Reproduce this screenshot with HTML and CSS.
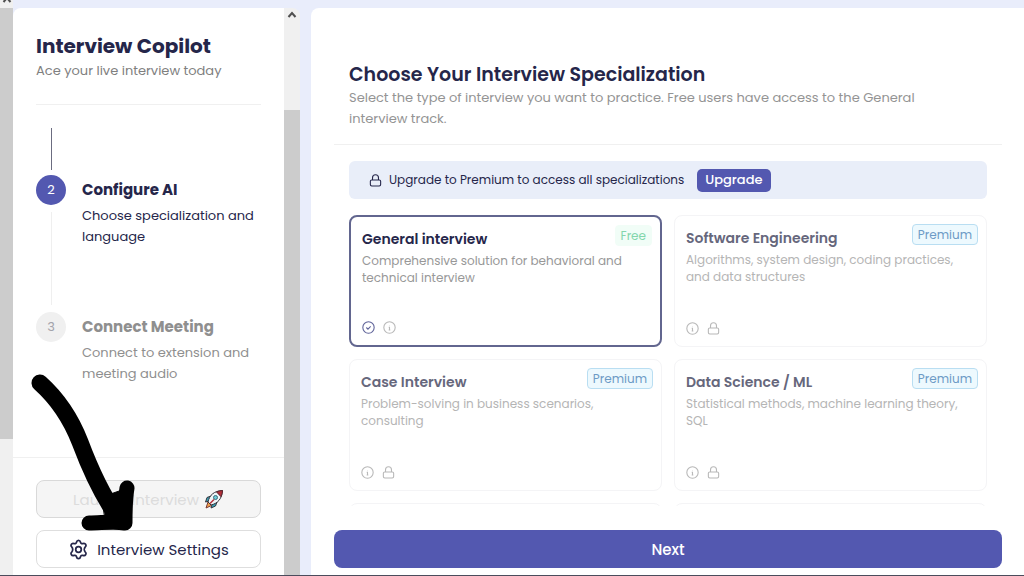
FILE: index.html
```html
<!DOCTYPE html>
<html lang="en">

<head>
  <meta charset="UTF-8">
  <title>Interview Copilot</title>
  <link rel="stylesheet" href="styles.css">
</head>

<body>
  <svg class="sprite" aria-hidden="true">
    <symbol id="lock" viewBox="0 0 24 24">
      <rect x="2.5" y="11" width="19" height="11" rx="2.5" />
      <path d="M6.5 11V7a5.500 5.500 0 0 1 11 0v4" />
    </symbol>
    <symbol id="info" viewBox="0 0 24 24">
      <circle cx="12" cy="12" r="10.500" />
      <path d="M10.500 11.500H12V16.500M10.500 16.500h3M12 7.500v.5" />
    </symbol>
    <symbol id="check" viewBox="0 0 24 24">
      <circle cx="12" cy="12" r="10.500" />
      <path d="M8 12l3 3 5-5" />
    </symbol>
    <symbol id="chevron" viewBox="0 0 10 10">
      <path d="M1.500 7L5 3l3.500 4" />
    </symbol>
  </svg>

  <div class="app">
    <div class="scrollbar scrollbar-page">
      <div class="scroll-cap"><svg class="chevron"><use href="#chevron" /></svg></div>
      <div class="scroll-thumb"></div>
    </div>

    <aside class="sidebar">
      <div class="sidebar-body">
        <header class="sidebar-header">
          <h1>Interview Copilot</h1>
          <p>Ace your live interview today</p>
        </header>

        <ol class="steps">
          <li class="step step-done">
            <div class="step-rail"><span class="step-line"></span></div>
          </li>
          <li class="step step-active">
            <div class="step-rail">
              <span class="step-number">2</span>
              <span class="step-line"></span>
            </div>
            <div class="step-text">
              <h2>Configure AI</h2>
              <p>Choose specialization and language</p>
            </div>
          </li>
          <li class="step">
            <div class="step-rail">
              <span class="step-number">3</span>
            </div>
            <div class="step-text">
              <h2>Connect Meeting</h2>
              <p>Connect to extension and meeting audio</p>
            </div>
          </li>
        </ol>

        <div class="sidebar-footer">
          <button class="btn btn-launch" disabled>
            Launch Interview
            <svg class="rocket" viewBox="0 0 20 20">
              <path d="M7 7L3 8.500 1.500 13l4-1zM13 13l-1.500 4L7 19l1-4z" fill="#39a0b5" stroke="#34343c" />
              <path d="M4 13l3.500 3.500L2 19z" fill="#f0a04b" stroke="#7b3b35" />
              <path d="M4 13C5.500 6 10 2 18.500 1.500 18 10 13.500 14.500 7 16z" fill="#eef5f8" stroke="#34343c" />
              <path d="M12.500 2.900C14.500 2 16.500 1.600 18.500 1.500 18.400 3.800 17.900 5.800 17 7.700z" fill="#b52e38" stroke="#5c242e" />
              <circle cx="11.500" cy="8.500" r="2" fill="#6fcbd8" stroke="#3a6e7c" />
              <path d="M6 14.500l4-4" stroke="#b52e38" stroke-width="1.500" />
            </svg>
          </button>
          <button class="btn btn-settings">
            <svg class="gear" viewBox="0 0 24 24">
              <path d="M12 1.500c1.500 0 2 .8 2.300 2.200.3 1.300 1.400 1.900 2.700 1.500 1.500-.5 2.500-.3 3.300 1 .8 1.400.4 2.200-.7 3.200-1.300 1.300-1.300 3.900 0 5.200 1.100 1 1.500 1.800.7 3.200-.8 1.300-1.800 1.500-3.300 1-1.300-.4-2.400.2-2.700 1.500-.3 1.400-.8 2.200-2.300 2.200s-2-.8-2.300-2.200c-.3-1.300-1.400-1.900-2.700-1.500-1.500.5-2.500.3-3.300-1-.8-1.400-.4-2.200.7-3.200 1.300-1.300 1.300-3.900 0-5.200-1.100-1-1.500-1.800-.7-3.200.8-1.300 1.800-1.500 3.300-1 1.300.4 2.400-.2 2.700-1.500.3-1.400.8-2.200 2.300-2.200z" />
              <circle cx="12" cy="12" r="3.200" />
            </svg>
            Interview Settings
          </button>
        </div>
      </div>

      <div class="scrollbar scrollbar-side">
        <div class="scroll-cap"><svg class="chevron"><use href="#chevron" /></svg></div>
        <div class="scroll-thumb"></div>
      </div>
    </aside>

    <main class="panel">
      <header class="panel-header">
        <h2>Choose Your Interview Specialization</h2>
        <p>Select the type of interview you want to practice. Free users have access to the General interview track.</p>
      </header>

      <div class="panel-scroll">
        <div class="banner">
          <svg class="icon"><use href="#lock" /></svg>
          <span>Upgrade to Premium to access all specializations</span>
          <button class="btn-upgrade">Upgrade</button>
        </div>

        <div class="cards">
          <button class="card card-selected">
            <span class="badge badge-free">Free</span>
            <span class="card-title">General interview</span>
            <span class="card-text">Comprehensive solution for behavioral and technical interview</span>
            <span class="card-icons">
              <svg class="icon icon-check"><use href="#check" /></svg>
              <svg class="icon"><use href="#info" /></svg>
            </span>
          </button>
          <button class="card">
            <span class="badge">Premium</span>
            <span class="card-title">Software Engineering</span>
            <span class="card-text">Algorithms, system design, coding practices, and data structures</span>
            <span class="card-icons">
              <svg class="icon"><use href="#info" /></svg>
              <svg class="icon"><use href="#lock" /></svg>
            </span>
          </button>
          <button class="card">
            <span class="badge">Premium</span>
            <span class="card-title">Case Interview</span>
            <span class="card-text">Problem-solving in business scenarios, consulting</span>
            <span class="card-icons">
              <svg class="icon"><use href="#info" /></svg>
              <svg class="icon"><use href="#lock" /></svg>
            </span>
          </button>
          <button class="card">
            <span class="badge">Premium</span>
            <span class="card-title">Data Science / ML</span>
            <span class="card-text">Statistical methods, machine learning theory, SQL</span>
            <span class="card-icons">
              <svg class="icon"><use href="#info" /></svg>
              <svg class="icon"><use href="#lock" /></svg>
            </span>
          </button>
          <div class="card"></div>
          <div class="card"></div>
        </div>
      </div>

      <button class="btn-next">Next</button>
    </main>
  </div>

  <!-- hand-drawn pointer to the settings button -->
  <svg class="arrow" viewBox="0 0 110 160" aria-hidden="true">
    <path class="arrow-shaft" d="M10 11C29 28 41 47 50 70C59 94 74 127 90 148" />
    <path class="arrow-head" d="M97 116C95 128 95 140 95 151C84 149 71 151 59 151" />
    <path class="arrow-fill" d="M72 125L92 118L99 152L76 152z" />
  </svg>
</body>

</html>
```
FILE: styles.css
```css
* {
  box-sizing: border-box;
}

body {
  margin: 0;
  font-family: Poppins, Inter, "Liberation Sans", sans-serif;
  font-size: 13px;
  color: #25264a;
  background-color: #e9edfb;
}

h1,
h2,
p,
ol {
  margin: 0;
  padding: 0;
}

button {
  font-family: inherit;
  color: inherit;
  cursor: pointer;
}

.sprite {
  display: none;
}

.app {
  display: flex;
  height: 100vh;
  overflow: hidden;
  border-bottom: 1px solid #4b4c5c;
}

/* scrollbars */
.scrollbar {
  display: flex;
  flex-direction: column;
  background-color: #f0f0f0;
}

.scrollbar-page {
  width: 13px;
}

.scrollbar-side {
  width: 16px;
  border-radius: 0 8px 0 0;
}

.scroll-cap {
  display: flex;
  justify-content: center;
}

.scrollbar-page .scroll-cap {
  height: 8px;
  align-items: flex-end;
  padding-bottom: 3px;
  overflow: hidden;
}

.scrollbar-side .scroll-cap {
  height: 102px;
  padding-top: 2px;
}

.scroll-thumb {
  background-color: #cccccc;
}

.scrollbar-page .scroll-thumb {
  height: 75%;
}

.scrollbar-side .scroll-thumb {
  flex: 1;
}

.chevron {
  flex: none;
  width: 10px;
  height: 10px;
  fill: none;
  stroke: #505050;
  stroke-width: 2;
}

/* sidebar */
.sidebar {
  display: flex;
  width: 287px;
  margin-top: 8px;
  flex: none;
}

.sidebar-body {
  display: flex;
  flex-direction: column;
  flex: 1;
  background-color: #fff;
  border-radius: 8px 0 0 0;
}

.sidebar-header {
  margin: 0 23px;
  padding: 24px 0 22px;
  border-bottom: 1px solid #f0f0f0;
}

.sidebar-header h1 {
  font-size: 20px;
  line-height: 28px;
}

.sidebar-header p {
  line-height: 22px;
  color: #808080;
}

.steps {
  flex: 1;
  padding: 23px 23px 0;
  list-style: none;
}

.step {
  display: flex;
  gap: 16px;
  color: #8f8f8f;
}

.step-rail {
  display: flex;
  flex-direction: column;
  align-items: center;
  gap: 7px;
  width: 30px;
  flex: none;
}

.step-line {
  width: 1px;
  flex: 1;
  background-color: #efefef;
}

.step-done {
  height: 47px;
  padding-bottom: 5px;
}

.step-done .step-line {
  background-color: #6b6c80;
}

.step-active {
  height: 137px;
  padding-bottom: 7px;
  color: #25264a;
}

.step-number {
  width: 30px;
  height: 30px;
  border-radius: 50%;
  line-height: 30px;
  text-align: center;
  color: #a3a3ab;
  background-color: #f0f0f0;
}

.step-active .step-number {
  color: #fff;
  background-color: #5358b0;
}

.step-text h2 {
  font-size: 15px;
  line-height: 30px;
}

.step-text p {
  line-height: 21px;
}

.sidebar-footer {
  display: flex;
  flex-direction: column;
  gap: 12px;
  padding: 22px 23px 7px;
  border-top: 1px solid #f0f0f0;
}

.btn {
  display: flex;
  align-items: center;
  justify-content: center;
  gap: 8px;
  height: 38px;
  font-size: 15px;
  background-color: #fff;
  border: 1px solid #dedede;
  border-radius: 8px;
}

.btn-launch {
  gap: 5px;
  color: #dcdcdc;
  background-color: #f5f5f5;
  border-color: #d9d9d9;
}

.rocket {
  width: 20px;
  height: 20px;
}

.gear {
  width: 21px;
  height: 21px;
  fill: none;
  stroke: #25264a;
  stroke-width: 2;
}

/* main panel */
.panel {
  display: flex;
  flex-direction: column;
  flex: 1;
  min-width: 0;
  margin: 8px 0 0 11px;
  padding: 54px 22px 7px 23px;
  background-color: #fff;
  border-radius: 8px 0 0 0;
}

.panel-header {
  padding: 0 15px 15px;
  border-bottom: 1px solid #f0f0f0;
}

.panel-header h2 {
  font-size: 19px;
  font-weight: 600;
  line-height: 25px;
}

.panel-header p {
  max-width: 600px;
  line-height: 21px;
  color: #949494;
}

.panel-scroll {
  flex: 1;
  min-height: 0;
  margin-bottom: 24px;
  padding: 16px 15px 0;
  overflow: hidden;
}

.banner {
  display: flex;
  align-items: center;
  gap: 7px;
  height: 38px;
  margin-bottom: 16px;
  padding: 0 20px;
  font-size: 12px;
  background-color: #e9eef9;
  border-radius: 6px;
}

.icon {
  width: 13px;
  height: 13px;
  fill: none;
  stroke: currentColor;
  stroke-width: 2;
}

.btn-upgrade {
  height: 23px;
  margin-left: 6px;
  padding: 0 8px;
  font-size: 13px;
  font-weight: 500;
  color: #fff;
  background-color: #5358b0;
  border: none;
  border-radius: 5px;
}

.cards {
  display: grid;
  grid-template-columns: 1fr 1fr;
  gap: 12px;
}

.card {
  position: relative;
  display: flex;
  flex-direction: column;
  height: 132px;
  padding: 11px;
  text-align: left;
  color: #66677c;
  background-color: #fff;
  border: 1px solid #f4f4f6;
  border-radius: 8px;
}

.card-selected {
  color: #25264a;
  border: 2px solid #62668f;
}

.card-title {
  margin-bottom: 2px;
  font-size: 14px;
  font-weight: 600;
  line-height: 22px;
}

.card-text {
  font-size: 12px;
  line-height: 17px;
  color: #b5b5b5;
}

.card-selected .card-text {
  color: #989898;
}

.card-icons {
  display: flex;
  gap: 8px;
  margin-top: auto;
  color: #b8b8b8;
}

.icon-check {
  color: #5f6399;
}

.badge {
  position: absolute;
  top: 8px;
  right: 8px;
  padding: 0 5px;
  font-size: 12px;
  line-height: 19px;
  color: #6d9bc6;
  background-color: #edf9fe;
  border: 1px solid #b9def2;
  border-radius: 4px;
}

.badge-free {
  color: #83d6ac;
  background-color: #f1fdf7;
  border-color: #f1fdf7;
}

.btn-next {
  height: 38px;
  font-size: 15px;
  font-weight: 500;
  color: #fff;
  background-color: #5358b0;
  border: none;
  border-radius: 8px;
}

.arrow {
  position: absolute;
  left: 30px;
  bottom: 44px;
  width: 110px;
  height: 160px;
  fill: none;
  stroke: #000;
  stroke-linecap: round;
  stroke-linejoin: round;
  pointer-events: none;
}

.arrow-shaft {
  stroke-width: 17;
}

.arrow-head {
  stroke-width: 15;
}

.arrow-fill {
  fill: #000;
}
```
